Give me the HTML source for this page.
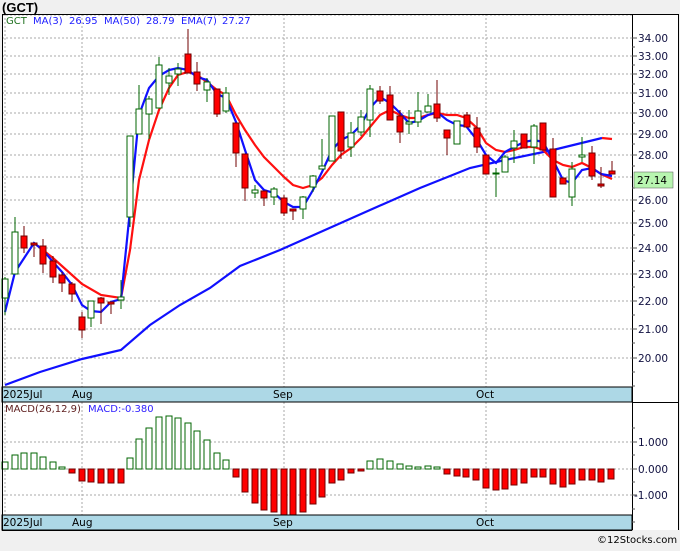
<!DOCTYPE html>
<html><head><meta charset="utf-8"><style>
html,body{margin:0;padding:0;background:#f0f0f0;}
body{width:680px;height:546px;overflow:hidden;font-family:"Liberation Sans",sans-serif;}
svg text{font-family:"DejaVu Sans","Liberation Sans",sans-serif;}
</style></head><body>
<svg width="680" height="546" viewBox="0 0 680 546" xmlns="http://www.w3.org/2000/svg">
<rect x="0" y="0" width="680" height="546" fill="#f0f0f0"/>
<text x="2" y="12" font-size="13" font-weight="bold" fill="#000" style="font-family:'Liberation Sans',sans-serif">(GCT)</text>
<rect x="2" y="14" width="676" height="516" fill="#fff"/>
<g stroke="#aaa" stroke-width="1" stroke-dasharray="2,2">
<line x1="2" y1="15" x2="632" y2="15"/>
<line x1="2" y1="38" x2="632" y2="38"/><line x1="2" y1="56" x2="632" y2="56"/><line x1="2" y1="74" x2="632" y2="74"/>
<line x1="2" y1="93" x2="632" y2="93"/><line x1="2" y1="113" x2="632" y2="113"/><line x1="2" y1="134" x2="632" y2="134"/>
<line x1="2" y1="155" x2="632" y2="155"/><line x1="2" y1="177" x2="632" y2="177"/><line x1="2" y1="200" x2="632" y2="200"/>
<line x1="2" y1="223" x2="632" y2="223"/><line x1="2" y1="248" x2="632" y2="248"/><line x1="2" y1="274" x2="632" y2="274"/>
<line x1="2" y1="301" x2="632" y2="301"/><line x1="2" y1="329" x2="632" y2="329"/><line x1="2" y1="358" x2="632" y2="358"/>
<line x1="5" y1="14" x2="5" y2="387"/><line x1="82" y1="14" x2="82" y2="387"/><line x1="284" y1="14" x2="284" y2="387"/><line x1="486" y1="14" x2="486" y2="387"/>
<line x1="5" y1="402" x2="5" y2="515"/><line x1="82" y1="402" x2="82" y2="515"/><line x1="284" y1="402" x2="284" y2="515"/><line x1="486" y1="402" x2="486" y2="515"/>
<line x1="2" y1="442" x2="632" y2="442"/><line x1="2" y1="469" x2="632" y2="469"/><line x1="2" y1="495" x2="632" y2="495"/>
</g>
<polyline fill="none" stroke="#1010ff" stroke-width="2.2" points="5,385 40,372 82,359 121,350 150,325 180,305 210,288 240,266 280,250 325,230 370,210 420,188 470,168 505,160 553,150 602,138"/>
<polyline fill="none" stroke="#ff1010" stroke-width="2.2" points="602,138 612,139"/>
<polyline fill="none" stroke="#ff1010" stroke-width="2.2" points="34,243 53,258 72,275 82,284 101,295 121,298 130,250 139,180 149,140 159,110 169,88 178,75 188,72 197,75 207,82 217,90 226,95 236,115 245,130 255,145 264,157 274,167 284,177 293,185 303,188 313,185 322,178 332,165 341,155 351,148 361,138 370,127 380,115 390,110 400,115 409,118 418,118 428,115 437,113 447,115 457,115 466,118 477,128 486,143 496,150 505,152 514,150 524,147 534,147 543,150 553,160 563,165 572,167 582,163 592,168 601,174 612,179"/>
<polyline fill="none" stroke="#1010ff" stroke-width="2.2" points="5,312 15,272 34,243 43,250 53,262 62,272 72,285 82,305 91,311 101,312 111,302 121,299 130,210 139,115 149,88 159,76 169,70 178,68 188,70 197,77 207,80 217,94 226,98 236,122 245,150 255,180 264,190 274,193 284,202 293,207 303,207 313,190 322,172 332,150 341,140 351,135 361,125 370,108 380,97 390,103 400,113 409,123 418,121 428,115 437,112 447,120 457,125 466,126 477,140 486,155 496,163 505,152 514,147 524,142 534,140 543,142 553,160 563,180 572,183 582,170 592,168 601,174 612,176"/>
<g stroke="#006400" stroke-width="1" fill="#fff">
<line x1="5" y1="277" x2="5" y2="315"/><rect x="2" y="279" width="6" height="19"/>
<line x1="15" y1="217" x2="15" y2="274"/><rect x="12" y="232" width="6" height="42"/>
<line x1="91" y1="301" x2="91" y2="327"/><rect x="88" y="301" width="6" height="17"/>
<line x1="121" y1="280" x2="121" y2="309"/><rect x="118" y="297" width="6" height="3"/>
<line x1="130" y1="136" x2="130" y2="227"/><rect x="127" y="136" width="6" height="81"/>
<line x1="139" y1="85" x2="139" y2="134"/><rect x="136" y="109" width="6" height="25"/>
<line x1="149" y1="96" x2="149" y2="139"/><rect x="146" y="99" width="6" height="15"/>
<line x1="159" y1="57" x2="159" y2="108"/><rect x="156" y="65" width="6" height="43"/>
<line x1="169" y1="68" x2="169" y2="95"/><rect x="166" y="76" width="6" height="7"/>
<line x1="178" y1="63" x2="178" y2="86"/><rect x="175" y="69" width="6" height="5"/>
<line x1="207" y1="78" x2="207" y2="102"/><rect x="204" y="82" width="6" height="8"/>
<line x1="226" y1="87" x2="226" y2="113"/><rect x="223" y="93" width="6" height="18"/>
<line x1="255" y1="185" x2="255" y2="198"/><rect x="252" y="190" width="6" height="3"/>
<line x1="274" y1="187" x2="274" y2="205"/><rect x="271" y="189" width="6" height="8"/>
<line x1="303" y1="196" x2="303" y2="219"/><rect x="300" y="197" width="6" height="12"/>
<line x1="313" y1="175" x2="313" y2="192"/><rect x="310" y="176" width="6" height="11"/>
<line x1="322" y1="139" x2="322" y2="169"/><rect x="319" y="166" width="6" height="3"/>
<line x1="332" y1="116" x2="332" y2="161"/><rect x="329" y="116" width="6" height="45"/>
<line x1="351" y1="122" x2="351" y2="157"/><rect x="348" y="133" width="6" height="14"/>
<line x1="361" y1="110" x2="361" y2="136"/><rect x="358" y="117" width="6" height="15"/>
<line x1="370" y1="85" x2="370" y2="137"/><rect x="367" y="89" width="6" height="31"/>
<line x1="409" y1="110" x2="409" y2="134"/><rect x="406" y="122" width="6" height="2"/>
<line x1="418" y1="92" x2="418" y2="127"/><rect x="415" y="111" width="6" height="11"/>
<line x1="428" y1="94" x2="428" y2="112"/><rect x="425" y="106" width="6" height="6"/>
<line x1="457" y1="121" x2="457" y2="144"/><rect x="454" y="121" width="6" height="23"/>
<line x1="496" y1="168" x2="496" y2="197"/><rect x="493" y="173" width="6" height="1"/>
<line x1="505" y1="155" x2="505" y2="172"/><rect x="502" y="157" width="6" height="15"/>
<line x1="514" y1="130" x2="514" y2="163"/><rect x="511" y="141" width="6" height="7"/>
<line x1="534" y1="124" x2="534" y2="164"/><rect x="531" y="126" width="6" height="21"/>
<line x1="572" y1="162" x2="572" y2="206"/><rect x="569" y="169" width="6" height="28"/>
<line x1="582" y1="137" x2="582" y2="162"/><rect x="579" y="155" width="6" height="2"/>
</g>
<g stroke="#700000" stroke-width="1" fill="#ff0000">
<line x1="24" y1="226" x2="24" y2="253"/><rect x="21" y="236" width="6" height="12"/>
<line x1="34" y1="243" x2="34" y2="257"/><rect x="31" y="243" width="6" height="2"/>
<line x1="43" y1="239" x2="43" y2="273"/><rect x="40" y="246" width="6" height="18"/>
<line x1="53" y1="256" x2="53" y2="283"/><rect x="50" y="261" width="6" height="16"/>
<line x1="62" y1="272" x2="62" y2="292"/><rect x="59" y="275" width="6" height="8"/>
<line x1="72" y1="282" x2="72" y2="302"/><rect x="69" y="284" width="6" height="10"/>
<line x1="82" y1="312" x2="82" y2="338"/><rect x="79" y="317" width="6" height="13"/>
<line x1="101" y1="297" x2="101" y2="324"/><rect x="98" y="298" width="6" height="5"/>
<line x1="111" y1="302" x2="111" y2="314"/><rect x="108" y="302" width="6" height="2"/>
<line x1="188" y1="29" x2="188" y2="73"/><rect x="185" y="54" width="6" height="19"/>
<line x1="197" y1="62" x2="197" y2="91"/><rect x="194" y="72" width="6" height="12"/>
<line x1="217" y1="89" x2="217" y2="117"/><rect x="214" y="89" width="6" height="25"/>
<line x1="236" y1="123" x2="236" y2="167"/><rect x="233" y="123" width="6" height="30"/>
<line x1="245" y1="154" x2="245" y2="201"/><rect x="242" y="154" width="6" height="34"/>
<line x1="264" y1="191" x2="264" y2="206"/><rect x="261" y="191" width="6" height="7"/>
<line x1="284" y1="195" x2="284" y2="216"/><rect x="281" y="198" width="6" height="15"/>
<line x1="293" y1="209" x2="293" y2="220"/><rect x="290" y="209" width="6" height="2"/>
<line x1="341" y1="112" x2="341" y2="159"/><rect x="338" y="112" width="6" height="39"/>
<line x1="380" y1="86" x2="380" y2="104"/><rect x="377" y="91" width="6" height="10"/>
<line x1="390" y1="86" x2="390" y2="120"/><rect x="387" y="95" width="6" height="25"/>
<line x1="400" y1="110" x2="400" y2="143"/><rect x="397" y="116" width="6" height="16"/>
<line x1="437" y1="80" x2="437" y2="122"/><rect x="434" y="104" width="6" height="14"/>
<line x1="447" y1="130" x2="447" y2="155"/><rect x="444" y="130" width="6" height="8"/>
<line x1="467" y1="112" x2="467" y2="127"/><rect x="464" y="115" width="6" height="12"/>
<line x1="477" y1="117" x2="477" y2="153"/><rect x="474" y="128" width="6" height="19"/>
<line x1="486" y1="155" x2="486" y2="174"/><rect x="483" y="155" width="6" height="19"/>
<line x1="524" y1="134" x2="524" y2="148"/><rect x="521" y="134" width="6" height="14"/>
<line x1="543" y1="123" x2="543" y2="150"/><rect x="540" y="123" width="6" height="27"/>
<line x1="553" y1="138" x2="553" y2="197"/><rect x="550" y="149" width="6" height="48"/>
<line x1="563" y1="178" x2="563" y2="184"/><rect x="560" y="178" width="6" height="6"/>
<line x1="592" y1="146" x2="592" y2="180"/><rect x="589" y="153" width="6" height="23"/>
<line x1="601" y1="167" x2="601" y2="188"/><rect x="598" y="184" width="6" height="2"/>
<line x1="612" y1="161" x2="612" y2="174"/><rect x="609" y="171" width="6" height="3"/>
</g>
<g font-size="10">
<text x="6" y="24" fill="#207020">GCT</text>
<text x="33" y="24" fill="#2020ff">MA(3)</text>
<text x="69" y="24" fill="#2020ff">26.95</text>
<text x="104" y="24" fill="#2020ff">MA(50)</text>
<text x="146" y="24" fill="#2020ff">28.79</text>
<text x="181" y="24" fill="#2020ff">EMA(7)</text>
<text x="222" y="24" fill="#2020ff">27.27</text>
</g>
<g stroke="#006400" fill="#fff" stroke-width="1">
<rect x="2" y="462" width="6" height="7"/><rect x="12" y="455" width="6" height="14"/><rect x="21" y="453" width="6" height="16"/><rect x="31" y="453" width="6" height="16"/><rect x="40" y="457" width="6" height="12"/><rect x="50" y="462" width="6" height="7"/><rect x="59" y="467" width="6" height="2"/>
<rect x="127" y="458" width="6" height="11"/><rect x="136" y="439" width="6" height="30"/><rect x="146" y="428" width="6" height="41"/><rect x="156" y="417" width="6" height="52"/><rect x="166" y="416" width="6" height="53"/><rect x="175" y="418" width="6" height="51"/><rect x="185" y="423" width="6" height="46"/><rect x="194" y="431" width="6" height="38"/><rect x="204" y="440" width="6" height="29"/><rect x="214" y="453" width="6" height="16"/><rect x="223" y="460" width="6" height="9"/>
<rect x="367" y="461" width="6" height="8"/><rect x="377" y="459" width="6" height="10"/><rect x="387" y="461" width="6" height="8"/><rect x="397" y="464" width="6" height="5"/><rect x="406" y="466" width="6" height="3"/><rect x="415" y="467" width="6" height="2"/><rect x="425" y="466" width="6" height="3"/><rect x="434" y="467" width="6" height="2"/>
</g>
<g stroke="#700000" fill="#ff0000" stroke-width="1">
<rect x="69" y="469" width="6" height="4"/><rect x="79" y="469" width="6" height="12"/><rect x="88" y="469" width="6" height="13"/><rect x="98" y="469" width="6" height="14"/><rect x="108" y="469" width="6" height="14"/><rect x="118" y="469" width="6" height="14"/>
<rect x="233" y="469" width="6" height="8"/><rect x="242" y="469" width="6" height="23"/><rect x="252" y="469" width="6" height="34"/><rect x="261" y="469" width="6" height="41"/><rect x="271" y="469" width="6" height="43"/><rect x="281" y="469" width="6" height="46"/><rect x="290" y="469" width="6" height="46"/><rect x="300" y="469" width="6" height="43"/><rect x="310" y="469" width="6" height="35"/><rect x="319" y="469" width="6" height="28"/><rect x="329" y="469" width="6" height="14"/><rect x="338" y="469" width="6" height="11"/><rect x="348" y="469" width="6" height="4"/><rect x="358" y="469" width="6" height="2"/>
<rect x="444" y="469" width="6" height="5"/><rect x="454" y="469" width="6" height="7"/><rect x="463" y="469" width="6" height="8"/><rect x="473" y="469" width="6" height="11"/><rect x="483" y="469" width="6" height="19"/><rect x="493" y="469" width="6" height="21"/><rect x="502" y="469" width="6" height="20"/><rect x="511" y="469" width="6" height="16"/><rect x="521" y="469" width="6" height="14"/><rect x="531" y="469" width="6" height="8"/><rect x="540" y="469" width="6" height="8"/><rect x="550" y="469" width="6" height="15"/><rect x="560" y="469" width="6" height="18"/><rect x="569" y="469" width="6" height="15"/><rect x="579" y="469" width="6" height="11"/><rect x="589" y="469" width="6" height="11"/><rect x="598" y="469" width="6" height="13"/><rect x="608" y="469" width="6" height="10"/>
</g>
<text x="5" y="412" font-size="10" fill="#602020">MACD(26,12,9)</text>
<text x="88" y="412" font-size="10" fill="#3020ff">MACD:-0.380</text>
<rect x="2" y="387" width="630" height="15" fill="#add8e6" stroke="#000" stroke-width="1"/>
<rect x="2" y="515" width="630" height="15" fill="#add8e6" stroke="#000" stroke-width="1"/>
<g font-size="10.5" fill="#000">
<text x="3" y="398">2025Jul</text><text x="72" y="398">Aug</text><text x="273" y="398">Sep</text><text x="476" y="398">Oct</text>
<text x="3" y="526">2025Jul</text><text x="72" y="526">Aug</text><text x="273" y="526">Sep</text><text x="476" y="526">Oct</text>
</g>
<line x1="2.5" y1="14" x2="2.5" y2="530" stroke="#000"/>
<line x1="2" y1="14.5" x2="678" y2="14.5" stroke="#000"/>
<line x1="632.5" y1="14" x2="632.5" y2="530" stroke="#000"/>
<line x1="678.5" y1="14" x2="678.5" y2="530" stroke="#000"/>
<line x1="2" y1="530.5" x2="632" y2="530.5" stroke="#000"/>
<g stroke="#555" stroke-width="1">
<line x1="632" y1="38" x2="637" y2="38"/><line x1="632" y1="56" x2="637" y2="56"/><line x1="632" y1="74" x2="637" y2="74"/><line x1="632" y1="93" x2="637" y2="93"/><line x1="632" y1="113" x2="637" y2="113"/><line x1="632" y1="134" x2="637" y2="134"/><line x1="632" y1="155" x2="637" y2="155"/><line x1="632" y1="200" x2="637" y2="200"/><line x1="632" y1="223" x2="637" y2="223"/><line x1="632" y1="248" x2="637" y2="248"/><line x1="632" y1="274" x2="637" y2="274"/><line x1="632" y1="301" x2="637" y2="301"/><line x1="632" y1="329" x2="637" y2="329"/><line x1="632" y1="358" x2="637" y2="358"/>
<line x1="632" y1="47" x2="635" y2="47"/><line x1="632" y1="65" x2="635" y2="65"/><line x1="632" y1="84" x2="635" y2="84"/><line x1="632" y1="103" x2="635" y2="103"/><line x1="632" y1="123" x2="635" y2="123"/><line x1="632" y1="144" x2="635" y2="144"/><line x1="632" y1="166" x2="635" y2="166"/><line x1="632" y1="188" x2="635" y2="188"/><line x1="632" y1="211" x2="635" y2="211"/><line x1="632" y1="235" x2="635" y2="235"/><line x1="632" y1="261" x2="635" y2="261"/><line x1="632" y1="287" x2="635" y2="287"/><line x1="632" y1="315" x2="635" y2="315"/><line x1="632" y1="343" x2="635" y2="343"/><line x1="632" y1="372" x2="635" y2="372"/><line x1="632" y1="386" x2="635" y2="386"/>
<line x1="632" y1="428" x2="635" y2="428"/><line x1="632" y1="442" x2="637" y2="442"/><line x1="632" y1="455" x2="635" y2="455"/><line x1="632" y1="469" x2="637" y2="469"/><line x1="632" y1="482" x2="635" y2="482"/><line x1="632" y1="495" x2="637" y2="495"/><line x1="632" y1="509" x2="635" y2="509"/><line x1="632" y1="522" x2="635" y2="522"/>
<line x1="632" y1="402.5" x2="678" y2="402.5" stroke="#000"/>
</g>
<g font-size="10.5" fill="#101040">
<text x="638" y="42">34.00</text><text x="638" y="60">33.00</text><text x="638" y="78">32.00</text><text x="638" y="97">31.00</text><text x="638" y="117">30.00</text><text x="638" y="138">29.00</text><text x="638" y="159">28.00</text><text x="638" y="204">26.00</text><text x="638" y="227">25.00</text><text x="638" y="252">24.00</text><text x="638" y="278">23.00</text><text x="638" y="305">22.00</text><text x="638" y="333">21.00</text><text x="638" y="362">20.00</text>
<text x="638" y="446">1.000</text><text x="638" y="473">0.000</text><text x="634" y="499">-1.000</text>
</g>
<rect x="634" y="172" width="39" height="16" fill="#b8f5b0" stroke="#555" stroke-width="0.5"/>
<text x="637" y="184" font-size="10.5" fill="#000">27.14</text>
<rect x="0" y="531" width="680" height="15" fill="#f0f0f0"/>
<text x="597" y="543" font-size="10" fill="#000">©12Stocks.com</text>
</svg>
</body></html>
